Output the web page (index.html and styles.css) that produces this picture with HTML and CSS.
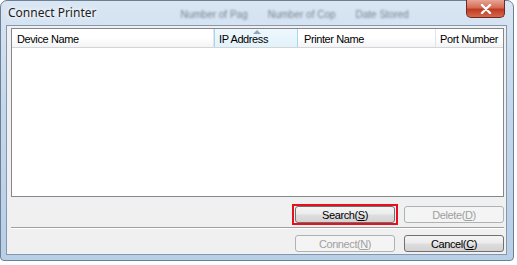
FILE: index.html
```html
<!DOCTYPE html>
<html lang="en">

<head>
	<meta charset="UTF-8">
	<title>Connect Printer</title>
	<link rel="stylesheet" href="styles.css">
</head>

<body>
	<div class="window">
		<div class="titlebar">
			<span class="title">Connect Printer</span>
			<div class="behind">
				<span>Number of Pag</span>
				<span>Number of Cop</span>
				<span>Date Stored</span>
			</div>
			<div class="close-btn">
				<svg width="14" height="10" viewBox="0 0 14 10">
					<path d="M3 1 L11 9 M11 1 L3 9" stroke="#fff" stroke-width="2.4" stroke-linecap="round" />
				</svg>
			</div>
		</div>
		<div class="client">
			<div class="list">
				<div class="list-header">
					<div class="col col-device">Device Name</div>
					<div class="col col-ip sorted">IP Address<span class="sort-arrow"></span></div>
					<div class="col col-printer">Printer Name</div>
					<div class="col col-port">Port Number</div>
				</div>
				<div class="list-body"></div>
			</div>
			<div class="btn-row">
				<div class="highlight">
					<button class="btn">Search(<u>S</u>)</button>
				</div>
				<button class="btn" disabled>Delete(<u>D</u>)</button>
			</div>
			<div class="separator"></div>
			<div class="btn-row bottom-row">
				<button class="btn" disabled>Connect(<u>N</u>)</button>
				<button class="btn">Cancel(<u>C</u>)</button>
			</div>
		</div>
	</div>
</body>

</html>
```

FILE: styles.css
```css
body {
	margin: 0;
	background: #fff;
	font-family: 'Liberation Sans', Arial, sans-serif;
	font-size: 11px;
	letter-spacing: -0.4px;
	color: #000;
}

.window {
	width: 514px;
	height: 261px;
	box-sizing: border-box;
	border: 1px solid #6e7f91;
	border-radius: 7px 7px 4px 4px;
	background: linear-gradient(180deg, #d9e6f3 0%, #c4d7ec 40%, #b8cfe8 100%);
	padding: 0 6px 5px 5px;
	display: flex;
	flex-direction: column;
}

.titlebar {
	height: 24px;
	display: flex;
	align-items: center;
	position: relative;
}

.title {
	margin-left: 2px;
	margin-top: -2px;
	font-family: 'Noto Sans', sans-serif;
	font-size: 12px;
	letter-spacing: 0;
	color: #1e1e1e;
	text-shadow: 0 0 6px #fff, 0 0 4px #fff;
}

.behind {
	display: flex;
	gap: 20px;
	margin-left: 84px;
	margin-top: 3px;
	color: #3f4c5a;
	font-size: 10px;
	letter-spacing: 0;
	filter: blur(1.3px);
	opacity: 0.65;
}

.close-btn {
	position: absolute;
	right: 2px;
	top: -1px;
	width: 39px;
	height: 18px;
	box-sizing: border-box;
	border: 1px solid #6b2b22;
	border-top: none;
	border-radius: 0 0 5px 5px;
	background: linear-gradient(180deg, #e8a494 0%, #d46c55 45%, #c03a21 55%, #d4694c 100%);
	display: flex;
	align-items: center;
	justify-content: center;
}

.client {
	flex: 1;
	background: #f0f0f0;
	border: 1px solid #8497ab;
	padding: 2px 2px 0 4px;
	display: flex;
	flex-direction: column;
}

.list {
	height: 169px;
	box-sizing: border-box;
	border: 1px solid #828790;
	background: #fff;
	display: flex;
	flex-direction: column;
}

.list-header {
	display: flex;
	height: 18px;
	background: linear-gradient(180deg, #ffffff 0%, #ffffff 50%, #f3f4f6 100%);
	border-bottom: 1px solid #d5d5d5;
}

.col {
	box-sizing: border-box;
	padding: 4px 0 0 5px;
	border-right: 1px solid #e1e5ea;
	white-space: nowrap;
	position: relative;
}

.col-device {
	width: 202px;
}

.col-ip {
	width: 84px;
}

.col-printer {
	width: 138px;
	padding-left: 6px;
}

.col-port {
	width: 67px;
	padding-left: 4px;
	border-right: none;
}

.sorted {
	background: linear-gradient(180deg, #eef8fd 0%, #e2f2fb 100%);
	border-left: 1px solid #a6d7f0;
	border-right: 1px solid #a6d7f0;
	padding-left: 4px;
}

.sort-arrow {
	position: absolute;
	top: 1px;
	left: 38px;
	width: 0;
	height: 0;
	border-left: 4px solid transparent;
	border-right: 4px solid transparent;
	border-bottom: 4px solid #8fa6bd;
}

.list-body {
	flex: 1;
}

.btn-row {
	display: flex;
	justify-content: flex-end;
	gap: 9px;
	margin-top: 9px;
}

.bottom-row {
	margin-top: 6px;
}

.btn {
	width: 100px;
	height: 17px;
	box-sizing: border-box;
	border: 1px solid #707070;
	border-radius: 3px;
	background: linear-gradient(180deg, #f4f4f4 0%, #ececec 48%, #dedede 52%, #d3d3d3 100%);
	font-family: 'Liberation Sans', Arial, sans-serif;
	font-size: 11px;
	letter-spacing: -0.4px;
	color: #000;
	padding: 0;
	line-height: 14px;
	display: block;
}

.btn:disabled {
	border-color: #adb2b5;
	background: #f4f4f4;
	color: #a0a0a0;
}

.highlight {
	position: relative;
}

.highlight::after {
	content: '';
	position: absolute;
	left: -3px;
	top: -2px;
	right: -3px;
	bottom: -2px;
	border: 2px solid #e8101c;
}

.separator {
	height: 1px;
	margin-top: 4px;
	background: #a0a0a0;
	border-bottom: 1px solid #fff;
	width: 493px;
}
```
